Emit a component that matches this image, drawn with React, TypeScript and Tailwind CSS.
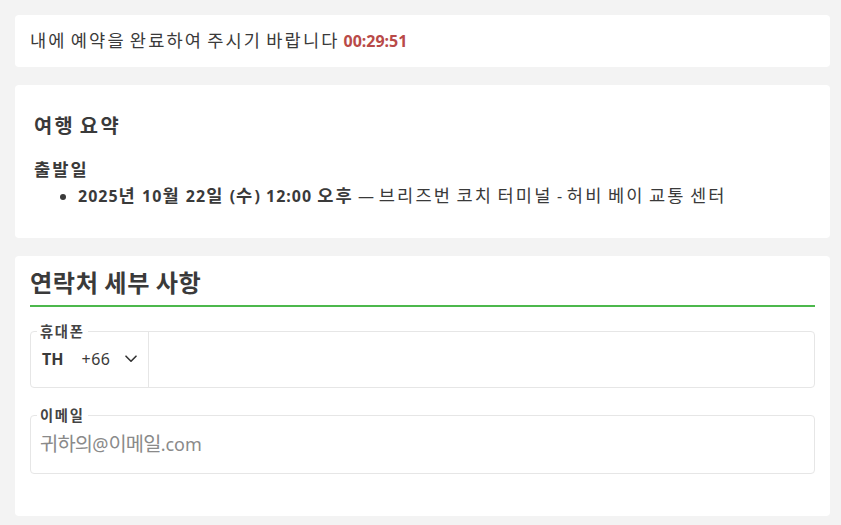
const font = { fontFamily: '"Noto Sans", "Noto Sans CJK KR", sans-serif' };

// the CJK font sets Hangul smaller and tighter than the reference; enlarge those runs only
function Ko({ children, cls = "tracking-[0.12em]" }: { children: string; cls?: string }) {
  const parts = children.split(/([\uAC00-\uD7A3]+)/);
  return (
    <>
      {parts.map((p, i) =>
        /[\uAC00-\uD7A3]/.test(p) ? (
          <span key={i} className={"text-[1.1em] leading-none " + cls}>
            {p}
          </span>
        ) : (
          p
        )
      )}
    </>
  );
}

function Field({ label, className, children }: { label: string; className?: string; children: React.ReactNode }) {
  return (
    <div className={"relative rounded-[4px] border border-[#e6e6e6] " + (className ?? "")}>
      <span className="absolute left-[6px] top-[-8px] bg-white px-[3px] text-[13px] font-bold leading-[16px] text-[#444]">
        <Ko>{label}</Ko>
      </span>
      {children}
    </div>
  );
}

function Chevron() {
  return (
    <svg width="12" height="8" viewBox="0 0 12 8" fill="none" className="ml-[15px]">
      <path d="M1 1.2 6 6.2 11 1.2" stroke="#333" strokeWidth="1.6" strokeLinecap="round" strokeLinejoin="round" />
    </svg>
  );
}

export default function App() {
  return (
    <div className="min-h-[525px] bg-[#f3f3f3] pl-[15px] pr-[11px] pt-[15px] pb-[9px] text-[#3a3a3a]" style={font}>
      <div className="flex h-[52px] items-center rounded-[4px] bg-white px-[15px] text-[16px] leading-[24px]">
        <span>
          <Ko>내에 예약을 완료하여 주시기 바랍니다</Ko>
        </span>
        <span className="ml-[4px] font-bold text-[#b94a48]">00:29:51</span>
      </div>

      <div className="mt-[18px] rounded-[4px] bg-white px-[19px] pt-[27px] pb-[28px]">
        <h2 className="text-[18px] font-bold leading-[28px]">
          <Ko>여행 요약</Ko>
        </h2>
        <h3 className="mt-[18px] text-[16px] font-bold leading-[24px]">
          <Ko>출발일</Ko>
        </h3>
        <ul className="list-disc pl-[44px] text-[16px] leading-[28px]">
          <li>
            <span className="font-bold tracking-[1px]">
              <Ko>2025년 10월 22일 (수) 12:00 오후</Ko>
            </span>{" "}
            <span className="tracking-[0.3px]">
              <Ko>— 브리즈번 코치 터미널 - 허비 베이 교통 센터</Ko>
            </span>
          </li>
        </ul>
      </div>

      <div className="mt-[18px] rounded-[4px] bg-white px-[15px] pt-[10px] pb-[42px]">
        <h2 className="border-b-2 border-[#4cb84c] pb-[5px] text-[22px] font-bold leading-[34px]">
          <Ko cls="tracking-[0.025em]">연락처 세부 사항</Ko>
        </h2>

        <Field label="휴대폰" className="mt-[24px] flex h-[57px] items-stretch">
          <div className="flex items-center border-r border-[#e6e6e6] pb-[1px] pl-[11px] pr-[11px] text-[16px]">
            <span className="font-bold">TH</span>
            <span className="ml-[18px] tracking-[0.5px]">+66</span>
            <Chevron />
          </div>
          <div className="flex-1" />
        </Field>

        <Field label="이메일" className="mt-[27px] flex h-[59px] items-center pl-[9px]">
          <span className="text-[18px] leading-[27px] text-[#8a8a8a]">
            <Ko cls="tracking-[-0.04em]">귀하의</Ko>@<Ko cls="tracking-[-0.04em]">이메일</Ko>.com
          </span>
        </Field>
      </div>
    </div>
  );
}
